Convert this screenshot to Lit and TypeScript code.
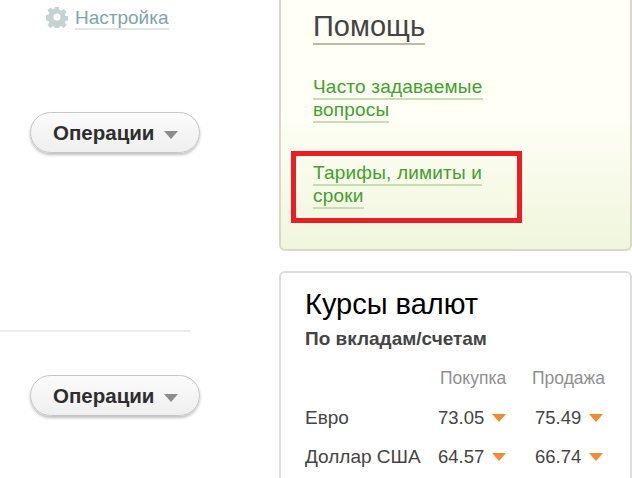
import { LitElement, html, css, svg } from "lit";
import { customElement } from "lit/decorators.js";

const rates = [
  { name: "Евро", buy: "73.05", sell: "75.49" },
  { name: "Доллар США", buy: "64.57", sell: "66.74" },
];

const gear = svg`<svg class="gear" width="22" height="22" viewBox="0 0 22 22">
  <path fill="#c3d3d0" fill-rule="evenodd" d="M9 1h4l.5 3 1.700.7 2.500-1.800 2.800 2.800-1.800 2.500.7 1.700 3 .5v4l-3 .5-.7 1.700 1.800 2.500-2.800 2.800-2.500-1.800-1.700.7-.5 3H9l-.5-3-1.700-.7-2.500 1.800-2.800-2.800 1.800-2.500-.7-1.700-3-.5V9l3-.5.7-1.700-1.800-2.500 2.800-2.800 2.500 1.800 1.700-.7zM11 7.500a3.500 3.500 0 1 0 0 7 3.500 3.500 0 0 0 0-7z"/>
</svg>`;

@customElement("app-root")
export class AppRoot extends LitElement {
  static styles = css`
    :host {
      display: flex;
      position: relative;
      width: 632px;
      height: 478px;
      overflow: hidden;
      background: #fff;
      font-family: "Liberation Sans", Arial, sans-serif;
      font-size: 19px;
    }

    .side {
      width: 279px;
      flex: none;
      display: flex;
      flex-direction: column;
    }

    .settings {
      display: flex;
      align-items: flex-start;
      gap: 7px;
      height: 30px;
      padding: 6px 0 0 46px;
      box-sizing: border-box;
    }

    .settings a {
      margin-top: 1px;
      color: #7ea5a8;
      line-height: 21px;
      border-bottom: 2px solid #dde6e4;
    }

    .gear {
      display: block;
      flex: none;
    }

    .ops {
      display: flex;
      align-items: center;
      box-sizing: border-box;
      width: 170px;
      height: 41px;
      margin-left: 30px;
      padding-left: 22px;
      gap: 10px;
      border: 1px solid #c6c6c6;
      border-radius: 21px;
      background: linear-gradient(#fbfbfb, #efefef);
      box-shadow: 0 2px 3px rgba(0, 0, 0, 0.25);
      color: #2e2e2e;
      font-weight: bold;
      font-size: 20.500px;
    }

    .ops i {
      width: 0;
      height: 0;
      margin-top: 4px;
      border-style: solid;
      border-width: 8px 7.5px 0;
      border-color: #8c8c8c transparent transparent;
    }

    .first {
      margin-top: 82px;
    }

    .rule {
      width: 190px;
      height: 2px;
      margin-top: 177px;
      background: #ececec;
    }

    .second {
      margin-top: 43px;
    }

    .main {
      flex: 1;
      display: flex;
      flex-direction: column;
      gap: 20px;
      min-width: 0;
    }

    .help {
      box-sizing: border-box;
      flex: none;
      height: 251px;
      width: 353px;
      padding: 10px 0 0 32px;
      border: 2px solid #dbd8ca;
      border-top: 0;
      border-radius: 0 0 6px 6px;
      background: linear-gradient(#fffff6 0, #fffff6 45%, #f0f6dc 100%);
    }

    .help h2 {
      display: inline-block;
      margin: 0;
      font-weight: normal;
      font-size: 29px;
      line-height: 33px;
      color: #444;
      border-bottom: 2px solid #b9b8ae;
    }

    .links {
      display: flex;
      flex-direction: column;
      gap: 40px;
      width: 190px;
      margin-top: 30px;
      color: #43a02c;
      line-height: 23px;
      letter-spacing: 0.2px;
    }

    .links span {
      padding-bottom: 1px;
      border-bottom: 2px solid #c6e0ad;
    }

    .rates {
      box-sizing: border-box;
      flex: 1;
      min-height: 0;
      width: 353px;
      padding: 15px 0 0 24px;
      border: 2px solid #dddddd;
      border-bottom: 0;
      border-radius: 6px 6px 0 0;
    }

    .rates h2 {
      margin: 0;
      font-weight: normal;
      font-size: 29px;
      line-height: 32px;
      color: #000;
    }

    .rates h3 {
      margin: 8px 0 0;
      font-size: 19px;
      line-height: 21px;
      color: #444;
    }

    .grid {
      display: grid;
      grid-template-columns: 133px 97px 72px;
      margin-top: 19px;
      color: #444;
    }

    .head {
      color: #8f8f8f;
      font-size: 17.500px;
      line-height: 20px;
      height: 30px;
    }

    .head.buy {
      padding-left: 2px;
    }

    .head.sell {
      margin-left: -3px;
      white-space: nowrap;
    }

    .cell {
      display: flex;
      align-items: center;
      gap: 8px;
      height: 39px;
    }

    .cell.num {
      font-size: 18.500px;
    }

    .cell i {
      width: 0;
      height: 0;
      border-style: solid;
      border-width: 8px 7.5px 0;
      border-color: #f58a2e transparent transparent;
    }

    .mark {
      position: absolute;
      left: 291px;
      top: 151px;
      width: 231px;
      height: 72px;
      box-sizing: border-box;
      border: 5px solid #ed1c24;
    }
  `;

  render() {
    return html`
      <div class="side">
        <div class="settings">${gear}<a>Настройка</a></div>
        <div class="ops first">Операции <i></i></div>
        <div class="rule"></div>
        <div class="ops second">Операции <i></i></div>
      </div>
      <div class="main">
        <section class="help">
          <h2>Помощь</h2>
          <div class="links">
            <div><span>Часто задаваемые</span> <span>вопросы</span></div>
            <div><span>Тарифы, лимиты и</span> <span>сроки</span></div>
          </div>
        </section>
        <section class="rates">
          <h2>Курсы валют</h2>
          <h3>По вкладам/счетам</h3>
          <div class="grid">
            <div class="head"></div>
            <div class="head buy">Покупка</div>
            <div class="head sell">Продажа</div>
            ${rates.map(
              (r) => html`
                <div class="cell">${r.name}</div>
                <div class="cell num">${r.buy}<i></i></div>
                <div class="cell num">${r.sell}<i></i></div>
              `
            )}
          </div>
        </section>
      </div>
      <div class="mark"></div>
    `;
  }
}
